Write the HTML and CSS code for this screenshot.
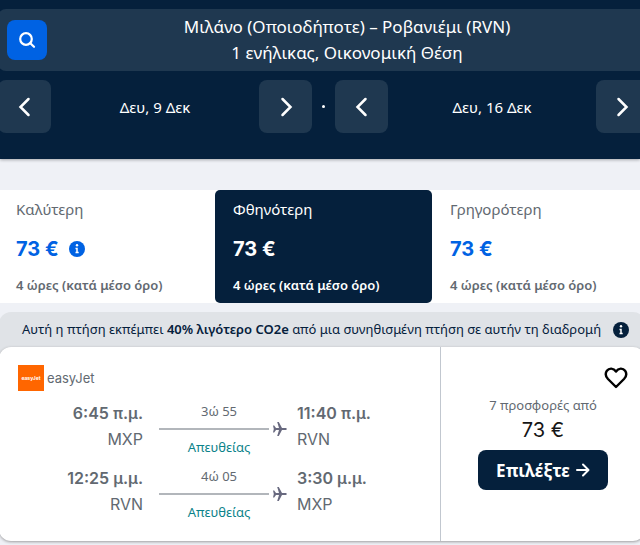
FILE: index.html
```html
<!DOCTYPE html>
<html lang="el">
<head>
    <meta charset="UTF-8">
    <meta name="viewport" content="width=device-width, initial-scale=1.0">
    <title>Μιλάνο – Ροβανιέμι</title>
    <link rel="stylesheet" href="styles.css">
</head>
<body>
    <header class="header">
        <div class="search-bar">
            <button class="search-button" aria-label="Αναζήτηση">
                <svg width="18" height="18" viewBox="0 0 18 18" fill="none" stroke="#fff" stroke-width="2.2" stroke-linecap="round"><circle cx="8" cy="8" r="5.8"/><path d="M12.3 12.3L16 15.8"/></svg>
            </button>
            <div class="search-summary">
                <div>Μιλάνο (Οποιοδήποτε) – Ροβανιέμι (RVN)</div>
                <div>1 ενήλικας, Οικονομική Θέση</div>
            </div>
        </div>
        <div class="dates">
            <div class="date">
                <button class="date-button" aria-label="Προηγούμενη αναχώρηση"><svg width="24" height="24" viewBox="0 0 24 24"><path d="M15.5 4L7.5 12l8 8"/></svg></button>
                <span>Δευ, 9 Δεκ</span>
                <button class="date-button" aria-label="Επόμενη αναχώρηση"><svg width="24" height="24" viewBox="0 0 24 24"><path d="M8.5 4l8 8-8 8"/></svg></button>
            </div>
            <span class="dot"></span>
            <div class="date">
                <button class="date-button" aria-label="Προηγούμενη επιστροφή"><svg width="24" height="24" viewBox="0 0 24 24"><path d="M15.5 4L7.5 12l8 8"/></svg></button>
                <span>Δευ, 16 Δεκ</span>
                <button class="date-button" aria-label="Επόμενη επιστροφή"><svg width="24" height="24" viewBox="0 0 24 24"><path d="M8.5 4l8 8-8 8"/></svg></button>
            </div>
        </div>
    </header>

    <main>
        <div class="tabs">
            <button class="tab">
                <span class="tab-name">Καλύτερη</span>
                <span class="tab-price">73 €
                    <svg width="16" height="16" viewBox="0 0 16 16"><circle cx="8" cy="8" r="8" fill="#0062e3"/><circle cx="8" cy="4.3" r="1.2" fill="#fff"/><path d="M6.5 7.5H8V11.5M6.5 11.5H9.7" fill="none" stroke="#fff" stroke-width="1.5"/></svg>
                </span>
                <span class="tab-time">4 ώρες (κατά μέσο όρο)</span>
            </button>
            <button class="tab active">
                <span class="tab-name">Φθηνότερη</span>
                <span class="tab-price">73 €</span>
                <span class="tab-time">4 ώρες (κατά μέσο όρο)</span>
            </button>
            <button class="tab">
                <span class="tab-name">Γρηγορότερη</span>
                <span class="tab-price">73 €</span>
                <span class="tab-time">4 ώρες (κατά μέσο όρο)</span>
            </button>
        </div>

        <article class="ticket">
            <div class="eco">
                <span>Αυτή η πτήση εκπέμπει <b>40% λιγότερο CO2e</b> από μια συνηθισμένη πτήση σε αυτήν τη διαδρομή</span>
                <svg width="16" height="16" viewBox="0 0 16 16"><circle cx="8" cy="8" r="8" fill="#05203c"/><circle cx="8" cy="4.3" r="1.2" fill="#fff"/><path d="M6.5 7.5H8V11.5M6.5 11.5H9.7" fill="none" stroke="#fff" stroke-width="1.5"/></svg>
            </div>
            <div class="card">
                <div class="flights">
                    <div class="airline"><span class="logo">easyJet</span>easyJet</div>
                    <div class="leg">
                        <div class="from"><b>6:45 π.μ.</b><span>MXP</span></div>
                        <div class="route">
                            <span class="duration">3ώ 55</span>
                            <span class="line"><svg width="14" height="14" viewBox="0 0 14 14"><path d="M0 3.5h1.2L3 6h3L4.2 0h1.6L9 6h3.2c2.2 0 2.2 2 0 2H9l-3.2 6H4.2L6 8H3l-1.8 2.5H0L.8 7z"/></svg></span>
                            <span class="direct">Απευθείας</span>
                        </div>
                        <div class="to"><b>11:40 π.μ.</b><span>RVN</span></div>
                    </div>
                    <div class="leg">
                        <div class="from"><b>12:25 μ.μ.</b><span>RVN</span></div>
                        <div class="route">
                            <span class="duration">4ώ 05</span>
                            <span class="line"><svg width="14" height="14" viewBox="0 0 14 14"><path d="M0 3.5h1.2L3 6h3L4.2 0h1.6L9 6h3.2c2.2 0 2.2 2 0 2H9l-3.2 6H4.2L6 8H3l-1.8 2.5H0L.8 7z"/></svg></span>
                            <span class="direct">Απευθείας</span>
                        </div>
                        <div class="to"><b>3:30 μ.μ.</b><span>MXP</span></div>
                    </div>
                </div>
                <div class="offer">
                    <button class="save" aria-label="Αποθήκευση"><svg width="24" height="22" viewBox="0 0 24 22"><path d="M12 4.5C9.5.8 5 .9 2.9 3.8 1 6.5 1.8 9.6 4 12l8 8 8-8c2.2-2.4 3-5.5 1.1-8.2C19 .9 14.5.8 12 4.5z" fill="none" stroke="#000" stroke-width="2.4" stroke-linejoin="round"/></svg></button>
                    <span class="offer-count">7 προσφορές από</span>
                    <span class="offer-price">73 €</span>
                    <button class="select">Επιλέξτε
                        <svg width="14" height="14" viewBox="0 0 14 14"><path d="M1 7h11M7 1.5L12.5 7 7 12.5" fill="none" stroke="#fff" stroke-width="2" stroke-linecap="round" stroke-linejoin="round"/></svg>
                    </button>
                </div>
            </div>
        </article>
    </main>
</body>
</html>
```
FILE: styles.css
```css
* {
    box-sizing: border-box;
}
body {
    margin: 0;
    background: #eff1f6;
    color: #626971;
    font-family: 'Noto Sans', sans-serif;
    overflow-x: hidden;
}
button {
    font-family: inherit;
    border: none;
    padding: 0;
    cursor: pointer;
}
svg {
    display: block;
    flex: none;
}
.header {
    background: #05203c;
    color: #fff;
    padding: 9px 0 26px;
    box-shadow: 0 1px 3px rgba(0, 0, 0, 0.3);
}
.search-bar {
    display: flex;
    align-items: center;
    margin: 0 -9px 9px -2px;
    padding: 5px 2px 5px 9px;
    background: #1f3850;
    border-radius: 8px;
}
.search-button {
    display: grid;
    place-items: center;
    width: 40px;
    height: 40px;
    border-radius: 8px;
    background: #0062e3;
}
.search-summary {
    flex: 1;
    text-align: center;
    font-size: 17px;
    line-height: 26px;
}
.dates {
    display: flex;
    align-items: center;
    gap: 10px;
    margin: 0 -9px 0 -2px;
}
.date {
    display: flex;
    flex: 1;
    align-items: center;
    justify-content: space-between;
    font-size: 15px;
    line-height: 20px;
}
.date-button {
    display: grid;
    place-items: center;
    width: 53px;
    height: 53px;
    border-radius: 8px;
    background: #1f3850;
}
.date-button path {
    fill: none;
    stroke: #fff;
    stroke-width: 2.5;
    stroke-linecap: round;
}
.dot {
    width: 3px;
    height: 3px;
    border-radius: 50%;
    background: #fff;
}
.tabs {
    display: grid;
    grid-template-columns: repeat(3, 1fr);
    margin: 31px -9px 9px -2px;
    background: #fff;
}
.tab {
    display: flex;
    flex-direction: column;
    padding: 8px 18px;
    background: #fff;
    border-radius: 5px;
    color: #626971;
    text-align: left;
}
.tab-name {
    font-size: 15px;
    line-height: 22px;
}
.tab-price {
    display: flex;
    align-items: center;
    gap: 10px;
    margin: 13px 0 11px;
    color: #0062e3;
    font: bold 20px/32px 'Inter', sans-serif;
}
.tab-time {
    font-size: 13px;
    font-weight: 600;
    line-height: 19px;
}
.tab.active, .tab.active .tab-price {
    background: #05203c;
    color: #fff;
}
.ticket {
    margin: 0 -5px 4px -1px;
    border-radius: 12px;
    background: #e0e3e7;
}
.eco {
    display: flex;
    align-items: center;
    justify-content: space-between;
    padding: 0 16px 0 23px;
    color: #05203c;
    font-size: 13px;
    line-height: 35px;
    white-space: nowrap;
}
.eco b {
    font-weight: 600;
}
.card {
    display: flex;
    background: #fff;
    border-radius: 12px;
    box-shadow: 0 1px 3px rgba(37, 32, 31, 0.4);
}
.flights {
    flex: 1;
    padding: 18px 19px 11px;
}
.airline {
    display: flex;
    align-items: center;
    gap: 3px;
    margin-bottom: 9px;
    font: 13px 'Inter', sans-serif;
}
.logo {
    display: grid;
    place-items: center;
    width: 26px;
    height: 26px;
    background: #ff6600;
    color: #fff;
    font-size: 5px;
    font-weight: bold;
}
.leg {
    display: grid;
    grid-template-columns: 125px 1fr 124px;
    gap: 10px;
    height: 65px;
}
.from, .to {
    display: flex;
    flex-direction: column;
    font-family: 'Inter', sans-serif;
    font-size: 16px;
    line-height: 26px;
}
.from {
    text-align: right;
}
.from b, .to b {
    font-weight: 600;
}
.route {
    display: flex;
    flex-direction: column;
}
.duration, .direct {
    width: 132px;
    font-size: 13px;
    line-height: 22px;
    text-align: center;
}
.direct {
    color: #0c838a;
}
.line {
    display: flex;
    align-items: center;
    gap: 4px;
    padding-left: 6px;
}
.line::before {
    content: "";
    flex: 1;
    height: 2px;
    background: #b2b6bb;
}
.line path {
    fill: #68697f;
}
.offer {
    display: flex;
    flex-direction: column;
    align-items: center;
    width: 205px;
    padding: 20px 17px;
    border-left: 1px solid #c1c7cf;
}
.save {
    align-self: flex-end;
    background: none;
}
.offer-count {
    margin-top: 6px;
    font-size: 13px;
    line-height: 20px;
}
.offer-price {
    color: #161616;
    font: 20px/30px 'Inter', sans-serif;
}
.select {
    display: flex;
    align-items: center;
    justify-content: center;
    gap: 6px;
    width: 130px;
    height: 40px;
    margin-top: 5px;
    border-radius: 8px;
    background: #05203c;
    color: #fff;
    font-size: 17px;
    font-weight: bold;
}
```
